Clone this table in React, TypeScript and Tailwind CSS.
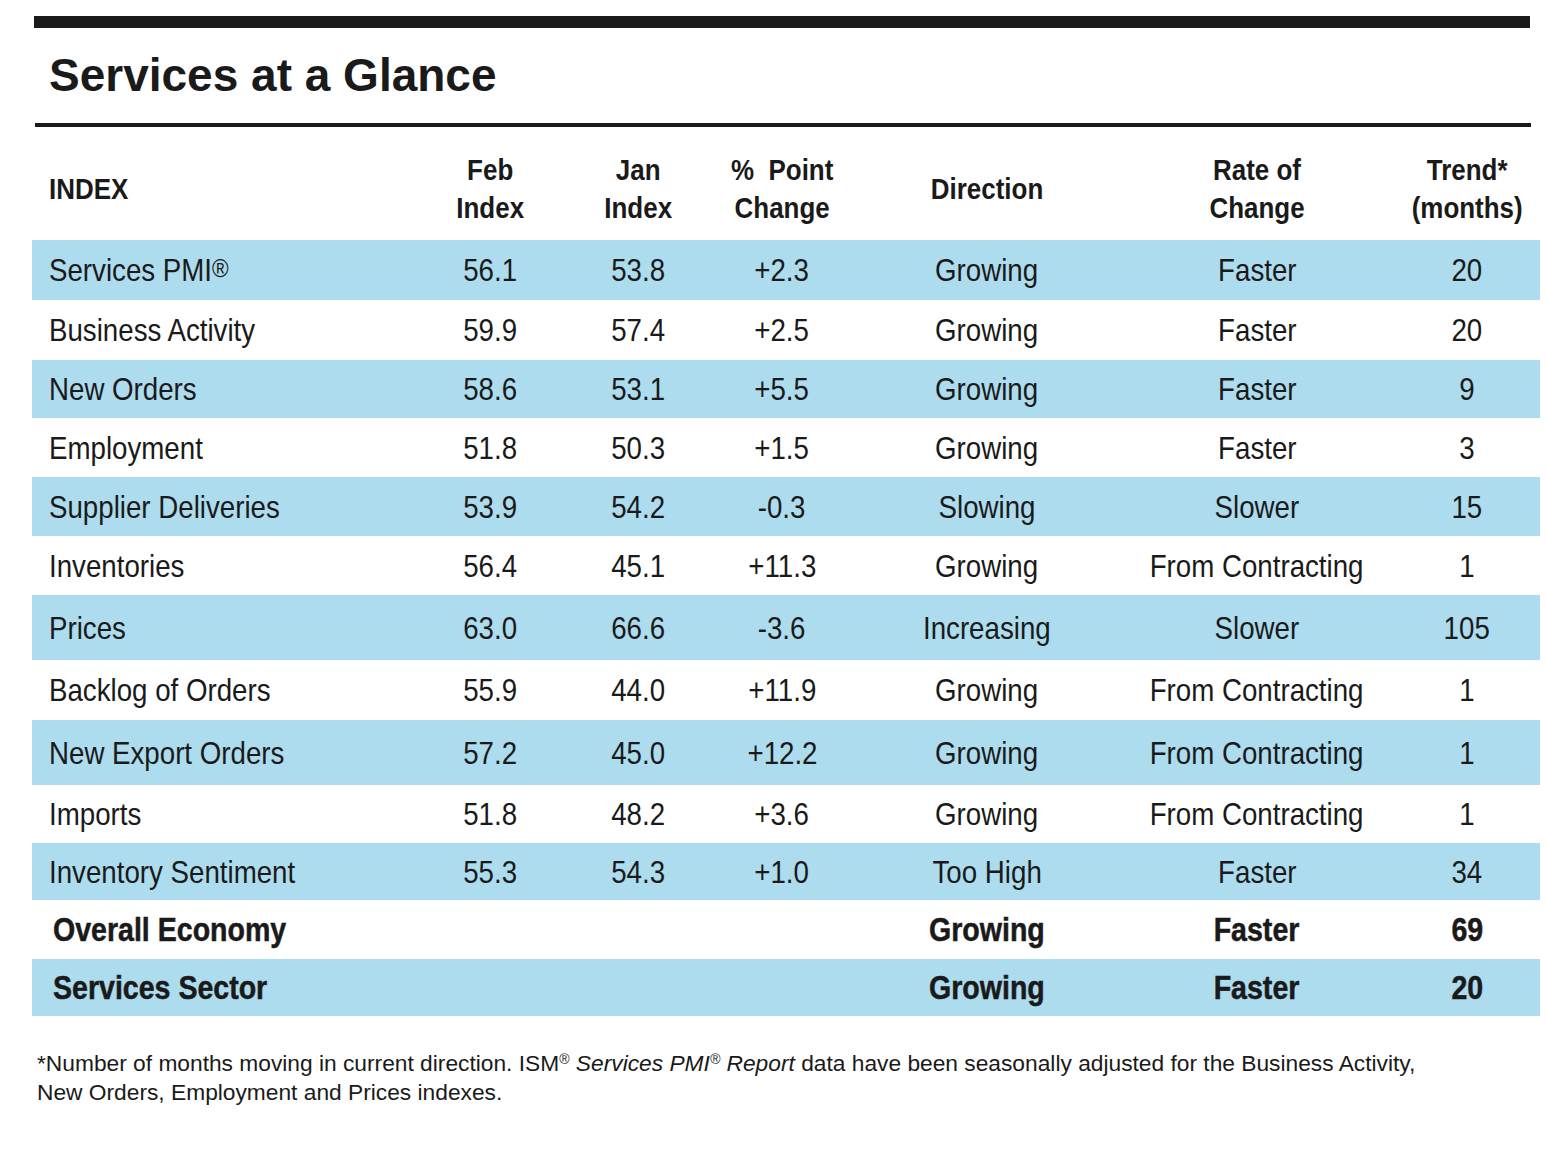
import React from "react";

type Row = {
  name: string;
  feb?: string;
  jan?: string;
  chg?: string;
  dir: string;
  rate: string;
  trend: string;
  h: string;
  blue: boolean;
  bold?: boolean;
  reg?: boolean;
};

const rows: Row[] = [
  { name: "Services PMI", reg: true, feb: "56.1", jan: "53.8", chg: "+2.3", dir: "Growing", rate: "Faster", trend: "20", h: "h-[60px]", blue: true },
  { name: "Business Activity", feb: "59.9", jan: "57.4", chg: "+2.5", dir: "Growing", rate: "Faster", trend: "20", h: "h-[60px]", blue: false },
  { name: "New Orders", feb: "58.6", jan: "53.1", chg: "+5.5", dir: "Growing", rate: "Faster", trend: "9", h: "h-[58px]", blue: true },
  { name: "Employment", feb: "51.8", jan: "50.3", chg: "+1.5", dir: "Growing", rate: "Faster", trend: "3", h: "h-[59px]", blue: false },
  { name: "Supplier Deliveries", feb: "53.9", jan: "54.2", chg: "-0.3", dir: "Slowing", rate: "Slower", trend: "15", h: "h-[59px]", blue: true },
  { name: "Inventories", feb: "56.4", jan: "45.1", chg: "+11.3", dir: "Growing", rate: "From Contracting", trend: "1", h: "h-[59px]", blue: false },
  { name: "Prices", feb: "63.0", jan: "66.6", chg: "-3.6", dir: "Increasing", rate: "Slower", trend: "105", h: "h-[65px]", blue: true },
  { name: "Backlog of Orders", feb: "55.9", jan: "44.0", chg: "+11.9", dir: "Growing", rate: "From Contracting", trend: "1", h: "h-[60px]", blue: false },
  { name: "New Export Orders", feb: "57.2", jan: "45.0", chg: "+12.2", dir: "Growing", rate: "From Contracting", trend: "1", h: "h-[65px]", blue: true },
  { name: "Imports", feb: "51.8", jan: "48.2", chg: "+3.6", dir: "Growing", rate: "From Contracting", trend: "1", h: "h-[58px]", blue: false },
  { name: "Inventory Sentiment", feb: "55.3", jan: "54.3", chg: "+1.0", dir: "Too High", rate: "Faster", trend: "34", h: "h-[57px]", blue: true },
  { name: "Overall Economy", dir: "Growing", rate: "Faster", trend: "69", h: "h-[59px]", blue: false, bold: true },
  { name: "Services Sector", dir: "Growing", rate: "Faster", trend: "20", h: "h-[57px]", blue: true, bold: true },
];

const grid = "grid grid-cols-[387px_142px_154px_134px_276px_264px_151px]";

function C({ children, left, className = "" }: { children?: React.ReactNode; left?: boolean; className?: string }) {
  return (
    <div className={`${left ? "text-left" : "text-center"} whitespace-nowrap ${className}`}>
      <span className={`inline-block scale-x-[0.865] ${left ? "origin-left" : "origin-center"}`}>{children}</span>
    </div>
  );
}

export default function App() {
  return (
    <div className="w-[1546px] h-[1152px] bg-white text-[#1a1a1a] relative overflow-hidden">
      <div className="pt-[16px] pl-[34px] pr-[16px]">
        <div className="h-[12px] bg-[#1a1a1a] w-[1496px]" />
        <div className="h-[95px] pl-[15px] flex items-center font-['Liberation_Sans',Arial,sans-serif] font-bold text-[46px] leading-none pb-[1px]">
          Services at a Glance
        </div>
        <div className="h-[4px] bg-[#1a1a1a] w-[1496px] ml-[1px]" />
      </div>

      <div className="ml-[32px] w-[1508px] font-['Liberation_Sans',Arial,sans-serif]">
        {/* header */}
        <div className={`${grid} h-[113px] pt-[24px] font-bold text-[30px] leading-[38px]`}>
          <C left className="pl-[17px] flex items-center h-[76px]">INDEX</C>
          <C>Feb<br />Index</C>
          <C>Jan<br />Index</C>
          <C>%&nbsp;&nbsp;Point<br />Change</C>
          <C className="flex items-center justify-center h-[76px]">Direction</C>
          <C>Rate of<br />Change</C>
          <C className="pl-[5px]">Trend*<br />(months)</C>
        </div>

        {rows.map((r) => (
          <div
            key={r.name}
            className={`${grid} ${r.h} items-center ${r.blue ? "bg-[#acdcee]" : "bg-white"} ${r.bold ? "font-bold text-[33px] [-webkit-text-stroke:0.5px_#1a1a1a]" : "text-[32px]"}`}
          >
            <C left className={r.bold ? "pl-[21px]" : "pl-[17px]"}>
              {r.name}
              {r.reg && <span className="text-[26px] relative -top-[4px] leading-none">®</span>}
            </C>
            <C>{r.feb}</C>
            <C>{r.jan}</C>
            <C>{r.chg}</C>
            <C>{r.dir}</C>
            <C>{r.rate}</C>
            <C className="pl-[5px]">{r.trend}</C>
          </div>
        ))}
      </div>

      <div className="pl-[37px] pt-[33px] font-['Liberation_Sans',Arial,sans-serif] text-[22.75px] leading-[29px]">
        <div>
          *Number of months moving in current direction. ISM<sup className="text-[14px]">®</sup>{" "}
          <i>Services PMI<sup className="text-[14px]">®</sup> Report</i> data have been seasonally adjusted for the Business Activity,
        </div>
        <div>New Orders, Employment and Prices indexes.</div>
      </div>
    </div>
  );
}
